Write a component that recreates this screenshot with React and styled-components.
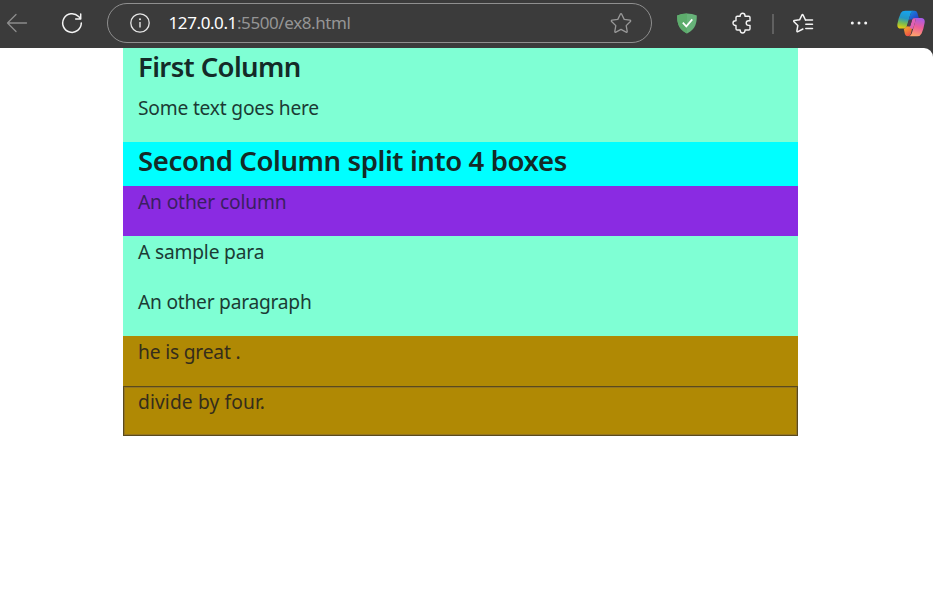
import React from "react";
import styled, { createGlobalStyle } from "styled-components";

const GlobalStyle = createGlobalStyle`
  *, *::before, *::after { box-sizing: border-box; }
  html, body { margin: 0; padding: 0; background: #3b3b3b; }
  body { font-family: "Noto Sans", "Open Sans", sans-serif; overflow: hidden; }
`;

const Browser = styled.div`
  width: 933px;
  height: 595px;
  display: flex;
  flex-direction: column;
  background: #3b3b3b;
`;

const Toolbar = styled.header`
  height: 48px;
  flex: none;
  display: flex;
  align-items: flex-start;
  padding-top: 3px;
  color: #f4f4f4;
`;

const IconButton = styled.span`
  display: flex;
  align-items: center;
  justify-content: center;
  flex: none;
  width: ${(p) => p.$width}px;
  height: 40px;
  margin-left: ${(p) => p.$gap || 0}px;
  color: ${(p) => (p.$muted ? "#8c8c8c" : "#f4f4f4")};

  svg { display: block; flex: none; }
`;

const AddressBar = styled.div`
  display: flex;
  align-items: center;
  flex: none;
  width: 545px;
  height: 40px;
  margin-left: 18px;
  padding: 0 19px 0 22px;
  border: 1px solid #8f8f8f;
  border-radius: 20px;
`;

const Url = styled.span`
  flex: 1;
  margin-left: 18.5px;
  font-size: 17px;
  line-height: 24px;
  white-space: nowrap;
  color: #959595;
  letter-spacing: -0.4px;
`;

const Host = styled.span`
  color: #fff;
  letter-spacing: -0.4px;
`;

const Divider = styled.span`
  width: 2px;
  height: 20px;
  margin: 11px 0 0 10px;
  flex: none;
  background: #606060;
`;

const Page = styled.main`
  flex: 1;
  background: #fff;
  border-top-right-radius: 9px;
`;

const Container = styled.div`
  width: 675px;
  margin-left: 123px;
`;

const Column = styled.section`
  padding: 0 15px;
  background: ${(p) => p.$bg};
  box-shadow: ${(p) => (p.$outlined ? "inset 0 0 0 1px #5a4a1c, inset 0 0 0 2px #957520" : "none")};
`;

const Heading = styled.h2`
  margin: 0;
  height: 44px;
  padding-top: 1px;
  font-size: 27.5px;
  font-weight: 600;
  line-height: 36px;
  white-space: nowrap;
  color: #142b28;
  letter-spacing: ${(p) => p.$track || 0}px;
`;

const Paragraph = styled.p`
  margin: 0;
  height: 50px;
  padding-top: 1px;
  font-size: 19.2px;
  line-height: 30px;
  white-space: nowrap;
  color: ${(p) => p.$ink || "#1b3b34"};
  letter-spacing: ${(p) => p.$track || 0}px;
`;

const BackIcon = () => (
  <svg width="22" height="20" viewBox="0 0 22 20" fill="none" stroke="currentColor" strokeWidth="1.3" strokeLinecap="round" strokeLinejoin="round">
    <path d="M20.5 10H1.5M10 1.5L1.5 10l8.500 8.500" />
  </svg>
);

const ReloadIcon = () => (
  <svg width="22" height="22" viewBox="0 0 22 22" fill="none" stroke="currentColor" strokeWidth="1.5" strokeLinecap="round" strokeLinejoin="round">
    <path d="M20.300 11A9.300 9.300 0 1 1 17.600 4.500L19.500 6.500M19.700 2v5h-5" />
  </svg>
);

const InfoIcon = () => (
  <svg width="20" height="20" viewBox="0 0 20 20" fill="none" stroke="#e6e6e6">
    <circle cx="10" cy="10" r="9.200" strokeWidth="1.300" />
    <path d="M10 9v5.500" strokeWidth="1.400" />
    <circle cx="10" cy="6.200" r="1" fill="#e6e6e6" stroke="none" />
  </svg>
);

const StarIcon = () => (
  <svg width="22" height="22" viewBox="0 0 22 22" fill="none" stroke="#989898" strokeWidth="1.300" strokeLinejoin="round">
    <path d="M10.300 2.200q.7-1.200 1.400 0l2.500 5.200 5.700.8q1.300.3.5 1.300l-4.200 4.100 1 5.700q.1 1.300-1.100.8L11 17.400l-5.100 2.700q-1.200.5-1.100-.8l1-5.700-4.200-4.100q-.8-1 .5-1.300l5.700-.8z" />
  </svg>
);

const ShieldIcon = () => (
  <svg width="20" height="21" viewBox="0 0 20 21" fill="none">
    <path d="M10 .5C7 .5 3 1.200.2 2.500.2 9.500 1 16 10 20.500 19 16 19.800 9.500 19.800 2.500 17 1.200 13 .5 10 .5z" fill="#67b279" />
    <path d="M10 .5C7 .5 3 1.200.2 2.500.2 9.500 1 16 10 20.500z" fill="#5dac6c" />
    <path d="M5.800 9.700l3.500 3.700 6-7" stroke="#fff" strokeWidth="1.700" />
  </svg>
);

const PuzzleIcon = () => (
  <svg width="20" height="22" viewBox="0 0 20 22" fill="none" stroke="currentColor" strokeWidth="1.400" strokeLinejoin="round">
    <path d="M8.200 4.200V3.700a2.400 2.400 0 0 1 4.800 0v.5h3.700q1.300 0 1.300 1.300v3.300h-1.500a2.300 2.300 0 0 0 0 4.600H18v3.300q0 1.300-1.300 1.300H13v.6a2.400 2.400 0 0 1-4.800 0V18H5.300Q4 18 4 16.700v-3.200h-.6a2.400 2.400 0 0 1 0-4.800H4V5.500q0-1.300 1.300-1.300z" />
  </svg>
);

const FavoritesIcon = () => (
  <svg width="22" height="21" viewBox="0 0 22 21" fill="none" stroke="currentColor" strokeWidth="1.500" strokeLinecap="round" strokeLinejoin="round">
    <path d="M13.500 7h7M13.800 11.300h6.700M13.800 15.500h6.700" />
    <path d="M13.500 7L11.100 2.100q-.6-1.200-1.200 0L7.600 6.800l-5.200.8q-1.200.2-.4 1.100l3.800 3.900-.9 5.300q-.1 1.200 1 .7l5-2.600" />
  </svg>
);

const MoreIcon = () => (
  <svg width="18" height="4" viewBox="0 0 18 4" fill="currentColor">
    <circle cx="2.300" cy="2" r="1.500" />
    <circle cx="9" cy="2" r="1.500" />
    <circle cx="15.700" cy="2" r="1.500" />
  </svg>
);

const CopilotIcon = () => (
  <svg width="28" height="27" viewBox="0 0 28 27" fill="none">
    <defs>
      <linearGradient id="leftRibbon" x1="9" y1="1" x2="5" y2="19" gradientUnits="userSpaceOnUse">
        <stop stopColor="#17a3ee" />
        <stop offset=".4" stopColor="#2396c4" />
        <stop offset=".7" stopColor="#7fbd4b" />
        <stop offset="1" stopColor="#f1cf09" />
      </linearGradient>
      <linearGradient id="rightRibbon" x1="23" y1="8" x2="18" y2="26" gradientUnits="userSpaceOnUse">
        <stop stopColor="#a65be8" />
        <stop offset=".5" stopColor="#ed5d99" />
        <stop offset="1" stopColor="#ffa36b" />
      </linearGradient>
      <linearGradient id="topFold" x1="14" y1="1" x2="20" y2="8" gradientUnits="userSpaceOnUse">
        <stop stopColor="#1687dc" />
        <stop offset="1" stopColor="#2445c8" />
      </linearGradient>
      <linearGradient id="bottomFold" x1="8" y1="19" x2="12" y2="26" gradientUnits="userSpaceOnUse">
        <stop stopColor="#f39532" />
        <stop offset="1" stopColor="#ee4d48" />
      </linearGradient>
    </defs>
    <path d="M8.300.8H16q-1.800.8-2.600 3.500L9.800 16q-.8 2.500-3 2.500H3.700Q-.4 18.500.5 13.500 1.600 7.500 3.800 3 5 .8 8.300.8z" fill="url(#leftRibbon)" />
    <path d="M15.500.8h2.200q2 0 2.700 2.200L21.800 8h-4.300q-1.800 0-2.500 2h-3.300l1.700-5.700Q14.200 1.300 15.500.8z" fill="url(#topFold)" />
    <path d="M17.500 8h6.700q4.200 0 3.400 5-1 6-3 10.500-1.200 2.700-4.400 2.700h-8q2-.8 2.700-3.200L18 12.500Q19 9 17.500 8z" fill="url(#rightRibbon)" />
    <path d="M6.700 18.500h.6q1.800-.2 2.500-2.500h5.800l-1.500 7q-.8 3.200-3.200 3.200-2.400 0-3-2.200z" fill="url(#bottomFold)" />
    <path d="M15 10q.7-2 2.500-2 1.500.8.700 3.700L16 19l-3.300-1z" fill="#df62b4" />
    <path d="M12.300 9.500h2.900L13 16.500h-2.900z" fill="#4a3c50" />
  </svg>
);

export default function App() {
  return (
    <>
      <GlobalStyle />
      <Browser>
        <Toolbar>
          <IconButton $width={34} $muted><BackIcon /></IconButton>
          <IconButton $width={34} $gap={21}><ReloadIcon /></IconButton>
          <AddressBar>
            <InfoIcon />
            <Url><Host>127.0.0.1</Host>:5500/ex8.html</Url>
            <StarIcon />
          </AddressBar>
          <IconButton $width={70}><ShieldIcon /></IconButton>
          <IconButton $width={40}><PuzzleIcon /></IconButton>
          <Divider />
          <IconButton $width={58}><FavoritesIcon /></IconButton>
          <IconButton $width={54}><MoreIcon /></IconButton>
          <IconButton $width={50}><CopilotIcon /></IconButton>
        </Toolbar>
        <Page>
          <Container>
            <Column $bg="#7fffd4">
              <Heading $track={-0.62}>First Column</Heading>
              <Paragraph $track={-0.2}>Some text goes here</Paragraph>
            </Column>
            <Column $bg="#00ffff">
              <Heading $track={-0.38}>Second Column split into 4 boxes</Heading>
            </Column>
            <Column $bg="#8a2be2">
              <Paragraph $ink="#3a1f61" $track={-0.15}>An other column</Paragraph>
            </Column>
            <Column $bg="#7fffd4">
              <Paragraph $track={-0.18}>A sample para</Paragraph>
              <Paragraph $track={-0.24}>An other paragraph</Paragraph>
            </Column>
            <Column $bg="#b08904">
              <Paragraph $ink="#352d1b" $track={-0.18}>he is great .</Paragraph>
            </Column>
            <Column $bg="#b08904" $outlined>
              <Paragraph $ink="#352d1b" $track={0.12}>divide by four.</Paragraph>
            </Column>
          </Container>
        </Page>
      </Browser>
    </>
  );
}
